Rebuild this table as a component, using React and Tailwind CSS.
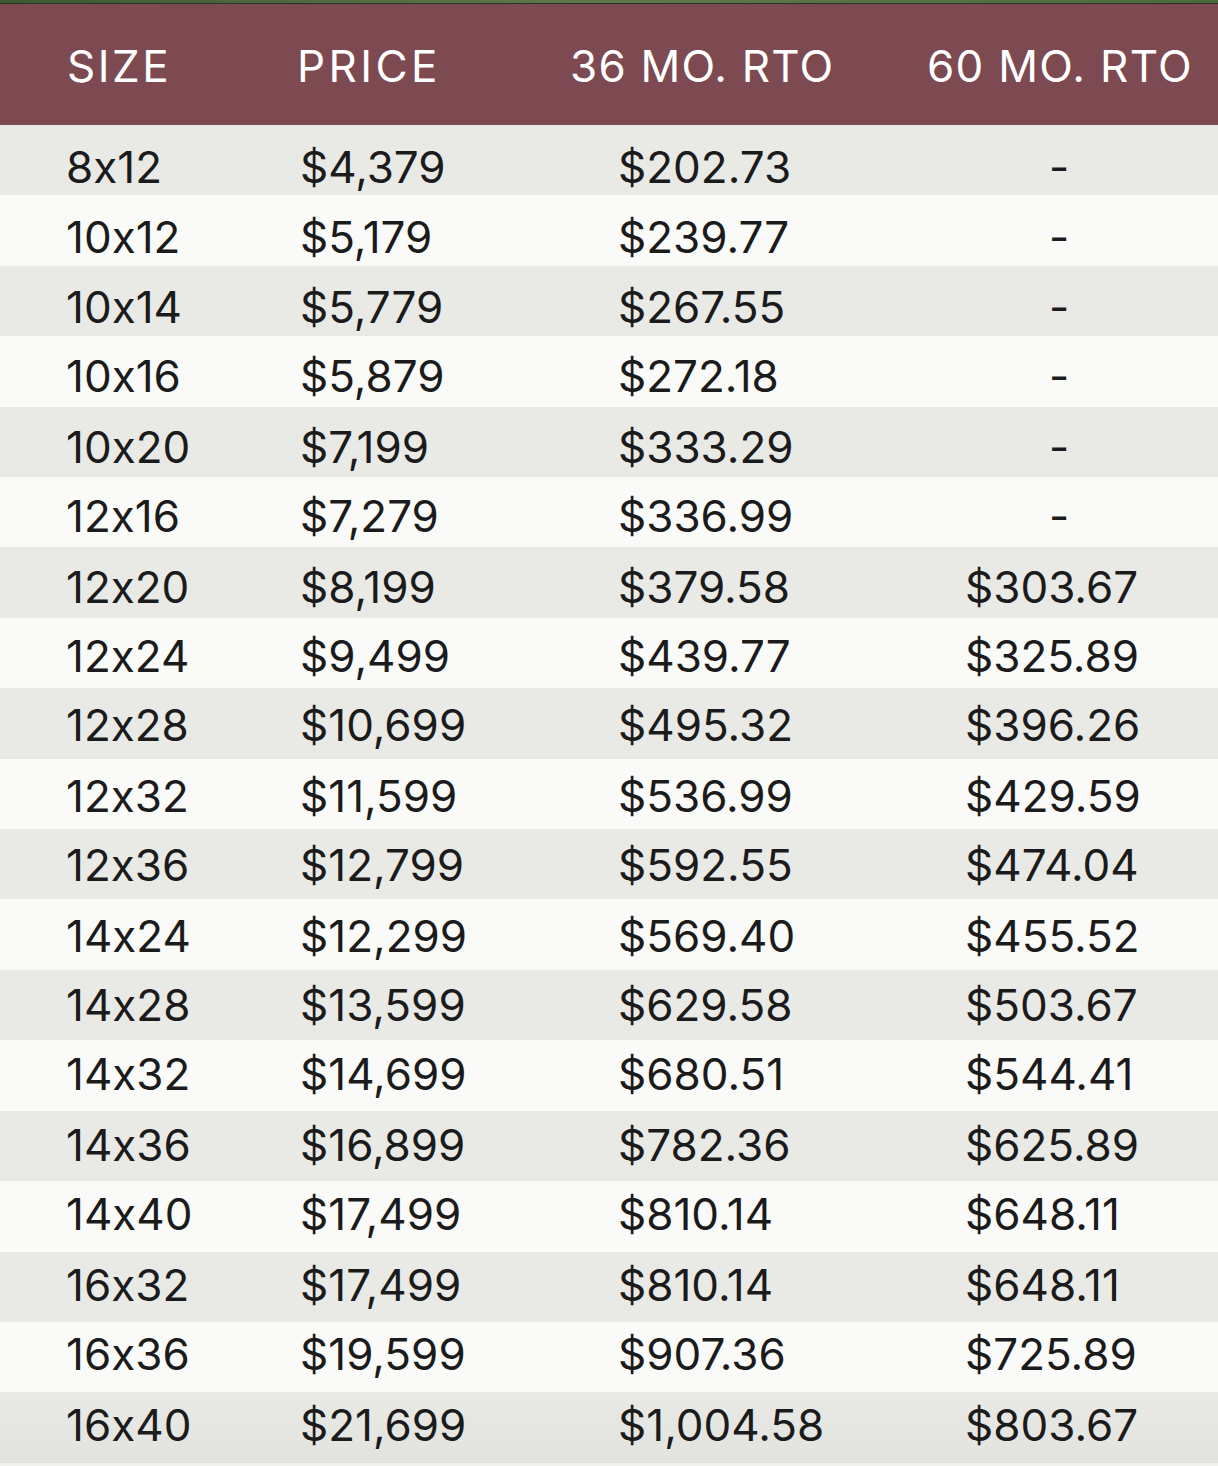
const rows = [
  ["8x12", "$4,379", "$202.73", "-"],
  ["10x12", "$5,179", "$239.77", "-"],
  ["10x14", "$5,779", "$267.55", "-"],
  ["10x16", "$5,879", "$272.18", "-"],
  ["10x20", "$7,199", "$333.29", "-"],
  ["12x16", "$7,279", "$336.99", "-"],
  ["12x20", "$8,199", "$379.58", "$303.67"],
  ["12x24", "$9,499", "$439.77", "$325.89"],
  ["12x28", "$10,699", "$495.32", "$396.26"],
  ["12x32", "$11,599", "$536.99", "$429.59"],
  ["12x36", "$12,799", "$592.55", "$474.04"],
  ["14x24", "$12,299", "$569.40", "$455.52"],
  ["14x28", "$13,599", "$629.58", "$503.67"],
  ["14x32", "$14,699", "$680.51", "$544.41"],
  ["14x36", "$16,899", "$782.36", "$625.89"],
  ["14x40", "$17,499", "$810.14", "$648.11"],
  ["16x32", "$17,499", "$810.14", "$648.11"],
  ["16x36", "$19,599", "$907.36", "$725.89"],
  ["16x40", "$21,699", "$1,004.58", "$803.67"],
];

export default function App() {
  return (
    <div
      className="w-[1218px] h-[1466px] bg-[#f0f0ee] overflow-hidden proportional-nums [font-feature-settings:'calt'_0]"
      style={{ fontFamily: "Inter, Lato, sans-serif" }}
    >
      <div className="h-[3px] bg-gradient-to-r from-[#3e5a32] via-[#5f7a4a] to-[#4b6a3a]" />
      <div className="h-[1px] bg-[#2b3322]" />
      <div className="h-[121px] bg-[#7d4a52] text-white text-[44px] grid grid-cols-[280px_270px_350px_318px] items-center pt-[2px]">
        <div className="pl-[67px] tracking-[2.5px]">SIZE</div>
        <div className="pl-[17px] tracking-[3.4px]">PRICE</div>
        <div className="pl-[20px] tracking-[1.2px]">36 MO. RTO</div>
        <div className="pl-[27px] tracking-[1.3px]">60 MO. RTO</div>
      </div>
      {rows.map((r, i) => (
        <div
          key={i}
          className={`h-[70.42px] flex flex-col justify-center pt-[14px] text-[44px] text-[#1b1b1b] ${
            i === rows.length - 1
              ? "bg-gradient-to-b from-[#e9e9e6] to-[#e2e2de]"
              : i % 2 === 0
              ? "bg-[#e9e9e6]"
              : "bg-[#fafaf8]"
          }`}
        >
          <div
            className="grid grid-cols-[280px_270px_350px_318px]"
            style={{ transform: `translateY(${(-0.58 * i).toFixed(2)}px)` }}
          >
            <div className="pl-[66px]">{r[0]}</div>
            <div className="pl-[20px]">{r[1]}</div>
            <div className="pl-[68px]">{r[2]}</div>
            {r[3] === "-" ? (
              <div className="pl-[149px]">-</div>
            ) : (
              <div className="pl-[65px]">{r[3]}</div>
            )}
          </div>
        </div>
      ))}
    </div>
  );
}
